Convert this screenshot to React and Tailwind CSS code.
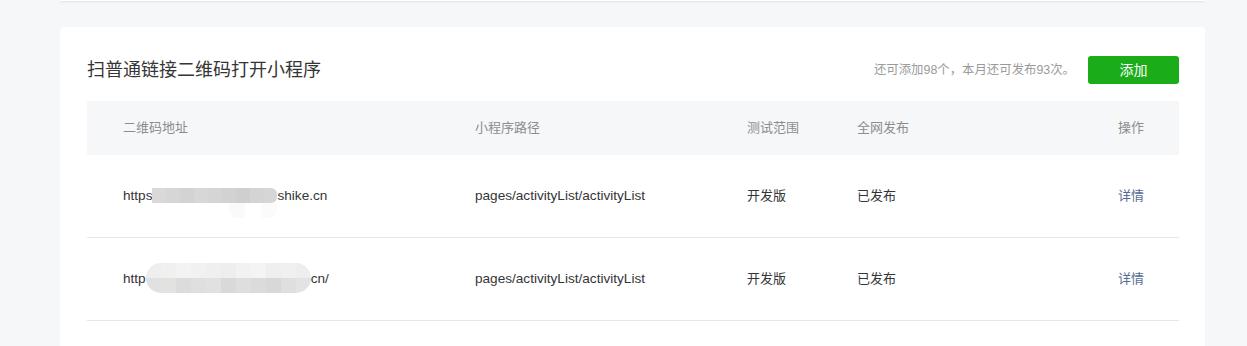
import React from "react";

const font = { fontFamily: '"Liberation Sans", "Noto Sans CJK SC", sans-serif' };

function Mosaic1() {
  const top = ["#d9d9d9", "#d6d6d6", "#d3d3d3", "#d7d7d7", "#d5d5d5", "#d2d2d2", "#cfcfcf", "#d4d4d4", "#d6d6d6"];
  return (
    <span className="relative inline-block align-middle w-[125px] h-[15px] -mt-[2px]">
      <span className="absolute inset-0 flex rounded-r-[6px] overflow-hidden">
        {top.map((c, i) => (
          <span key={i} className="flex-1" style={{ background: c }} />
        ))}
      </span>
      <span className="absolute left-[77px] top-[15px] w-[48px] h-[15px] flex rounded-b-[8px] overflow-hidden">
        <span className="flex-1 bg-[#fafafa]" />
        <span className="flex-1 bg-[#ffffff]" />
        <span className="flex-1 bg-[#fbfbfb]" />
      </span>
    </span>
  );
}

function Mosaic2() {
  const top = ["#eeeeee", "#f0f0f0", "#f3f3f3", "#f1f1f1", "#efefef", "#eeeeee", "#f2f2f2", "#f4f4f4", "#efefef", "#f0f0f0", "#eeeeee"];
  const bot = ["#e1e1e1", "#e3e2e1", "#dcdcdc", "#dfdfdf", "#e2e1e0", "#d9d9d9", "#dedede", "#dbdbdb", "#d8d8d8", "#e0dfde", "#e3e3e3"];
  return (
    <span className="inline-flex flex-col align-middle w-[165px] h-[30px] rounded-full overflow-hidden -mt-[2px]">
      <span className="flex h-[15px]">
        {top.map((c, i) => (
          <span key={i} className="flex-1" style={{ background: c }} />
        ))}
      </span>
      <span className="flex h-[15px]">
        {bot.map((c, i) => (
          <span key={i} className="flex-1" style={{ background: c }} />
        ))}
      </span>
    </span>
  );
}

function Row({ url, path, scope, status }) {
  return (
    <div className="grid grid-cols-[352px_272px_110px_1fr_60px] items-center h-[83px] pl-[36px] pr-[35px] border-b border-[#e7e7eb] text-[13px] text-[#353535]">
      <div className="whitespace-nowrap text-[13.6px]">{url}</div>
      <div className="text-[13.6px]">{path}</div>
      <div>{scope}</div>
      <div>{status}</div>
      <div className="text-right text-[#576b95]">详情</div>
    </div>
  );
}

export default function App() {
  return (
    <div className="min-h-[346px] bg-[#f6f7f9] overflow-hidden" style={font}>
      <div className="ml-[60px] w-[1145px] h-px bg-white shadow-[0_1px_2px_rgba(0,0,0,0.12)]" />
      <div className="ml-[60px] w-[1145px] mt-[26px] bg-white rounded-[4px] pl-[27px] pr-[26px] pt-[29px] pb-[40px]">
        <div className="flex items-center h-7">
          <div className="text-[18px] text-[#353535]">扫普通链接二维码打开小程序</div>
          <div className="ml-auto text-[12.4px] text-[#9a9a9a] mr-[13px]">还可添加98个，本月还可发布93次。</div>
          <button className="w-[91px] h-7 rounded-[3px] bg-[#1aad19] text-white text-[14px]">添加</button>
        </div>
        <div className="mt-[17px]">
          <div className="grid grid-cols-[352px_272px_110px_1fr_60px] items-center h-[54px] pl-[36px] pr-[35px] bg-[#f6f7f9] text-[13px] text-[#8d8d8d]">
            <div>二维码地址</div>
            <div>小程序路径</div>
            <div>测试范围</div>
            <div>全网发布</div>
            <div className="text-right">操作</div>
          </div>
          <Row
            url={<>https<Mosaic1 />shike.cn</>}
            path="pages/activityList/activityList"
            scope="开发版"
            status="已发布"
          />
          <Row
            url={<>http<Mosaic2 />cn/</>}
            path="pages/activityList/activityList"
            scope="开发版"
            status="已发布"
          />
        </div>
      </div>
    </div>
  );
}
